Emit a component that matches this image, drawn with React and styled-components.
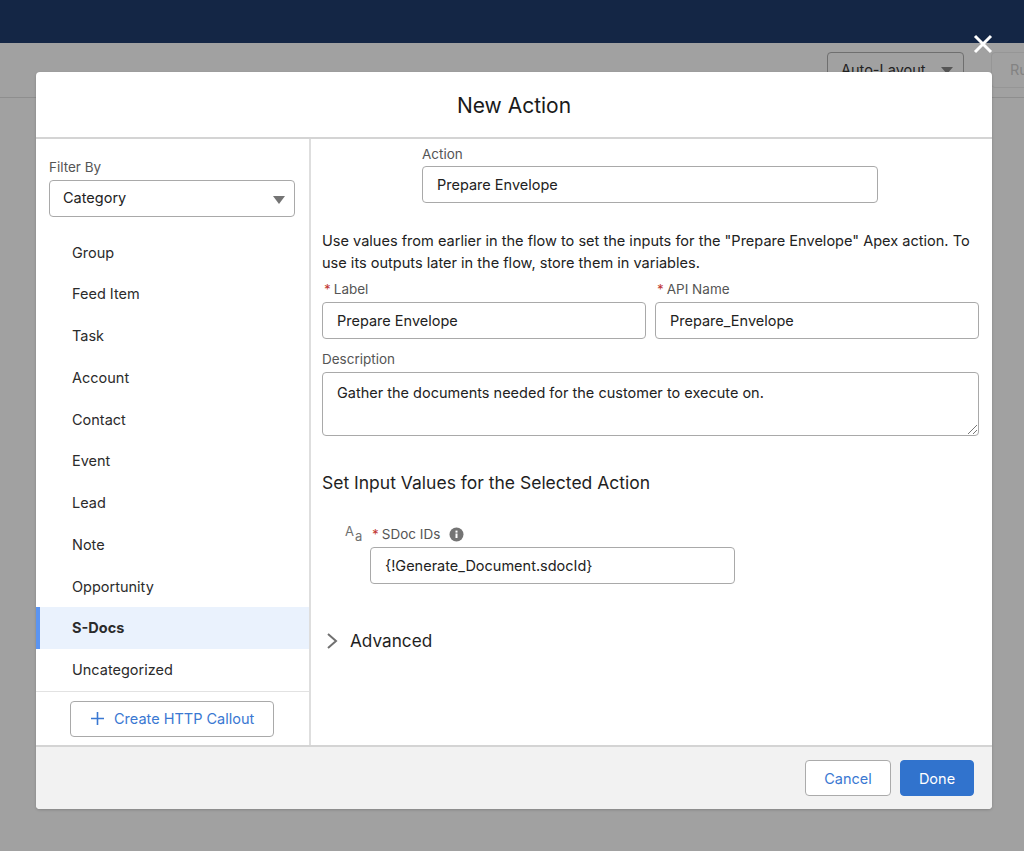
import React from 'react';
import styled, { createGlobalStyle } from 'styled-components';

const Global = createGlobalStyle`
  html, body { margin: 0; padding: 0; height: 100%; }
  body { background: #a3a3a3; font-family: Inter, "Noto Sans", sans-serif; color: #1f1f1f; overflow: hidden; }
  * { box-sizing: border-box; }
`;

const Page = styled.div`
  position: relative;
  width: 1024px;
  height: 851px;
  overflow: hidden;
  background: #a1a1a1;
`;
const TopBar = styled.div`
  height: 43px;
  background: #142645;
`;
const Toolbar = styled.div`
  height: 55px;
  display: flex;
  justify-content: flex-end;
  gap: 27px;
  padding: 9px 0 0 0;
  border-bottom: 1px solid #8e8e8e;
  margin-right: -60px;
`;
const GhostButton = styled.div`
  position: relative;
  height: 36px;
  width: ${p => p.$w}px;
  border: 1px solid ${p => p.$muted ? '#969696' : '#6f6f6f'};
  border-radius: 4px;
  font-size: 14.5px;
  line-height: 34px;
  padding-left: ${p => p.$muted ? 18 : 13}px;
  color: ${p => p.$muted ? '#838383' : '#222'};
`;
const ButtonCaret = styled.span`
  position: absolute;
  right: 10px;
  top: 14px;
  border-left: 6px solid transparent;
  border-right: 6px solid transparent;
  border-top: 7px solid #555;
`;
const CloseBtn = styled.svg`
  position: absolute;
  left: 973px;
  top: 34px;
  width: 20px;
  height: 20px;
`;
const Modal = styled.div`
  position: absolute;
  left: 36px;
  top: 72px;
  width: 956px;
  height: 737px;
  border-radius: 4px;
  background: #fff;
  display: flex;
  flex-direction: column;
  overflow: hidden;
  box-shadow: 0 1px 3px rgba(0,0,0,.18);
`;
const Header = styled.div`
  height: 67px;
  flex: none;
  display: flex;
  align-items: center;
  justify-content: center;
  border-bottom: 2px solid #d4d4d4;
  padding-top: 2px;
  font-size: 21px;
  font-weight: 400;
  color: #1a1a1a;
`;
const Body = styled.div`
  flex: 1;
  display: flex;
  min-height: 0;
`;
const Sidebar = styled.aside`
  width: 275px;
  flex: none;
  border-right: 2px solid #dedede;
  display: flex;
  flex-direction: column;
`;
const FilterBlock = styled.div`
  padding: 19px 14px 0 13px;
`;
const SmallLabel = styled.div`
  font-size: 13.5px;
  line-height: 18px;
  color: #555;
`;
const SelectBox = styled.div`
  position: relative;
  margin-top: 4px;
  height: 37px;
  border: 1px solid #a9a9a9;
  border-radius: 4px;
  font-size: 14.5px;
  line-height: 34px;
  padding-left: 13px;
  color: #222;
  &::after {
    content: '';
    position: absolute;
    right: 9px;
    top: 15px;
    border-left: 6.5px solid transparent;
    border-right: 6.5px solid transparent;
    border-top: 8px solid #747474;
  }
`;
const CategoryList = styled.div`
  margin-top: 14.5px;
  display: flex;
  flex-direction: column;
  flex: 1;
`;
const Category = styled.div`
  height: 41.75px;
  line-height: 41.75px;
  padding-left: ${p => p.$active ? 32 : 36}px;
  font-size: 14.5px;
  font-weight: ${p => p.$active ? 700 : 400};
  color: #2b2b2b;
  background: ${p => p.$active ? '#eaf2fd' : 'transparent'};
  border-left: ${p => p.$active ? '4px solid #5b94f1' : 'none'};
`;
const CalloutRow = styled.div`
  height: 56px;
  flex: none;
  border-top: 1px solid #e2e2e2;
  padding: 9px 0 0 34px;
`;
const CalloutButton = styled.div`
  width: 204px;
  height: 36px;
  border: 1px solid #a9a9a9;
  border-radius: 4px;
  display: flex;
  align-items: center;
  gap: 9px;
  padding-left: 19px;
  font-size: 14.5px;
  color: #3a78d2;
`;
const Content = styled.main`
  flex: 1;
  padding: 5px 14px 0 11px;
  display: flex;
  flex-direction: column;
`;
const ActionField = styled.div`
  margin-left: 100px;
  width: 456px;
`;
const FieldLabel = styled.div`
  font-size: 13.5px;
  line-height: 18px;
  color: #555;
  margin-bottom: 4px;
`;
const ActionLabel = styled(FieldLabel)`
  margin-top: 1px;
  margin-bottom: 3px;
`;
const Required = styled.span`
  color: #c23934;
  margin-right: 3px;
  margin-left: 2px;
`;
const Input = styled.div`
  height: 37px;
  border: 1px solid #a9a9a9;
  border-radius: 4px;
  font-size: 14.5px;
  line-height: 35px;
  padding-left: 14px;
  color: #222;
`;
const HelpText = styled.p`
  margin: 27px 0 0 0;
  font-size: 14.55px;
  line-height: 22px;
  color: #222;
`;
const NameRow = styled.div`
  display: grid;
  grid-template-columns: 324px 324px;
  gap: 9px;
  margin-top: 6px;
`;
const DescBlock = styled.div`
  margin-top: 11px;
`;
const TextArea = styled.div`
  position: relative;
  height: 64px;
  border: 1px solid #a9a9a9;
  border-radius: 4px;
  padding: 11px 14px;
  font-size: 14.5px;
  line-height: 18px;
  color: #222;
`;
const Grip = styled.svg`
  position: absolute;
  right: 0;
  bottom: 0;
  width: 11px;
  height: 11px;
`;
const SectionTitle = styled.h2`
  margin: 35px 0 0 0;
  font-size: 17.5px;
  line-height: 24px;
  font-weight: 400;
  color: #1f1f1f;
`;
const ParamRow = styled.div`
  display: flex;
  margin-top: 30px;
  margin-left: 23px;
`;
const TypeGlyph = styled.div`
  width: 25px;
  flex: none;
  font-size: 13px;
  color: #707070;
  line-height: 14px;
  margin-top: -1px;
  & sub { font-size: 13px; vertical-align: baseline; position: relative; top: 5px; margin-left: 1px; }
`;
const ParamField = styled.div`
  width: 365px;
`;
const ParamLabel = styled(FieldLabel)`
  display: flex;
  align-items: center;
`;
const InfoIcon = styled.svg`
  width: 15px;
  height: 15px;
  margin-left: 9px;
`;
const AdvancedRow = styled.div`
  display: flex;
  align-items: center;
  gap: 12px;
  margin-top: 45px;
  margin-left: 4px;
  font-size: 17.2px;
  line-height: 24px;
  color: #1f1f1f;
`;
const Footer = styled.div`
  height: 64px;
  flex: none;
  background: #f2f2f2;
  border-top: 2px solid #d4d4d4;
  display: flex;
  justify-content: flex-end;
  align-items: center;
  gap: 9px;
  padding: 0 18px 0 0;
`;
const FooterButton = styled.div`
  height: 36px;
  width: ${p => p.$w}px;
  border-radius: 4px;
  display: flex;
  align-items: center;
  justify-content: center;
  font-size: 14.5px;
  border: 1px solid ${p => p.$primary ? '#3173cd' : '#ababab'};
  background: ${p => p.$primary ? '#3173cd' : '#fff'};
  color: ${p => p.$primary ? '#fff' : '#3a78d2'};
`;

const categories = ['Group','Feed Item','Task','Account','Contact','Event','Lead','Note','Opportunity','S-Docs','Uncategorized'];

export default function App() {
  return (
    <Page>
      <Global />
      <TopBar />
      <Toolbar>
        <GhostButton $w={137}>Auto-Layout<ButtonCaret /></GhostButton>
        <GhostButton $w={93} $muted>Run</GhostButton>
      </Toolbar>
      <CloseBtn viewBox="0 0 20 20" fill="none" stroke="#fff" strokeWidth="3">
        <path d="M2 2 L18 18 M18 2 L2 18" />
      </CloseBtn>
      <Modal>
        <Header>New Action</Header>
        <Body>
          <Sidebar>
            <FilterBlock>
              <SmallLabel>Filter By</SmallLabel>
              <SelectBox>Category</SelectBox>
            </FilterBlock>
            <CategoryList>
              {categories.map(c => <Category key={c} $active={c === 'S-Docs'}>{c}</Category>)}
            </CategoryList>
            <CalloutRow>
              <CalloutButton>
                <svg width="15" height="15" viewBox="0 0 15 15" stroke="#3a78d2" strokeWidth="1.6" fill="none"><path d="M7.5 1 V14 M1 7.5 H14" /></svg>
                Create HTTP Callout
              </CalloutButton>
            </CalloutRow>
          </Sidebar>
          <Content>
            <ActionField>
              <ActionLabel>Action</ActionLabel>
              <Input>Prepare Envelope</Input>
            </ActionField>
            <HelpText>Use values from earlier in the flow to set the inputs for the "Prepare Envelope" Apex action. To use its outputs later in the flow, store them in variables.</HelpText>
            <NameRow>
              <div>
                <FieldLabel><Required>*</Required>Label</FieldLabel>
                <Input>Prepare Envelope</Input>
              </div>
              <div>
                <FieldLabel><Required>*</Required>API Name</FieldLabel>
                <Input>Prepare_Envelope</Input>
              </div>
            </NameRow>
            <DescBlock>
              <FieldLabel>Description</FieldLabel>
              <TextArea>
                Gather the documents needed for the customer to execute on.
                <Grip viewBox="0 0 11 11" stroke="#777" strokeWidth="1" fill="none"><path d="M1 10 L10 1 M6 10 L10 6" /></Grip>
              </TextArea>
            </DescBlock>
            <SectionTitle>Set Input Values for the Selected Action</SectionTitle>
            <ParamRow>
              <TypeGlyph>A<sub>a</sub></TypeGlyph>
              <ParamField>
                <ParamLabel>
                  <Required>*</Required>SDoc IDs
                  <InfoIcon viewBox="0 0 15 15">
                    <circle cx="7.5" cy="7.5" r="7" fill="#747474" />
                    <rect x="6.5" y="6.5" width="2" height="4.5" fill="#fff" />
                    <rect x="6.5" y="3.6" width="2" height="2" fill="#fff" />
                  </InfoIcon>
                </ParamLabel>
                <Input>{'{!Generate_Document.sdocId}'}</Input>
              </ParamField>
            </ParamRow>
            <AdvancedRow>
              <svg width="12" height="18" viewBox="0 0 12 18" fill="none" stroke="#707070" strokeWidth="2"><path d="M2 2 L10 9 L2 16" /></svg>
              Advanced
            </AdvancedRow>
          </Content>
        </Body>
        <Footer>
          <FooterButton $w={86}>Cancel</FooterButton>
          <FooterButton $w={74} $primary>Done</FooterButton>
        </Footer>
      </Modal>
    </Page>
  );
}
